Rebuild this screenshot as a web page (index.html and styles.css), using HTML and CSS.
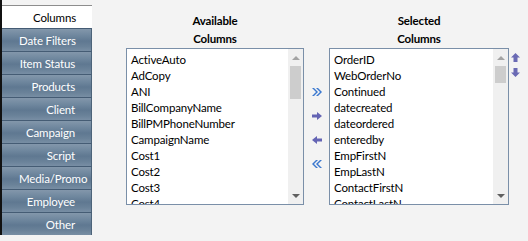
FILE: index.html
```html
<!DOCTYPE html>
<html>
<head>
<meta charset="utf-8">
<link rel="stylesheet" href="styles.css">
</head>
<body>
<div class="app">
  <div class="sidebar">
    <div class="tab active">Columns</div>
    <div class="tab">Date Filters</div>
    <div class="tab">Item Status</div>
    <div class="tab">Products</div>
    <div class="tab">Client</div>
    <div class="tab">Campaign</div>
    <div class="tab">Script</div>
    <div class="tab">Media/Promo</div>
    <div class="tab">Employee</div>
    <div class="tab">Other</div>
  </div>
  <div class="main">
    <div class="col col-avail">
      <div class="hdr">Available<br>Columns</div>
      <div class="listbox">
        <div class="items">
          <div class="item">ActiveAuto</div>
          <div class="item">AdCopy</div>
          <div class="item">ANI</div>
          <div class="item">BillCompanyName</div>
          <div class="item">BillPMPhoneNumber</div>
          <div class="item">CampaignName</div>
          <div class="item">Cost1</div>
          <div class="item">Cost2</div>
          <div class="item">Cost3</div>
          <div class="item">Cost4</div>
        </div>
        <div class="sbar">
          <div class="sb-up"><span class="tri-up light"></span></div>
          <div class="thumb thumb-long"></div>
          <div class="sb-fill"></div>
          <div class="sb-down"><span class="tri-down"></span></div>
        </div>
      </div>
    </div>
    <div class="movers">
      <svg class="mv" width="12" height="10" viewBox="0 0 12 10"><path d="M1 1 L5 5 L1 9 L3 9 L7 5 L3 1 Z M5 1 L9 5 L5 9 L7 9 L11 5 L7 1 Z" fill="#3b78cf"/></svg>
      <svg class="mv" width="12" height="10" viewBox="0 0 12 10"><path d="M1 3.5 H6 V1 L11 5 L6 9 V6.5 H1 Z" fill="#6464b4"/></svg>
      <svg class="mv" width="12" height="10" viewBox="0 0 12 10"><path d="M11 3.5 H6 V1 L1 5 L6 9 V6.5 H11 Z" fill="#6464b4"/></svg>
      <svg class="mv" width="12" height="10" viewBox="0 0 12 10"><path d="M11 1 L7 5 L11 9 L9 9 L5 5 L9 1 Z M7 1 L3 5 L7 9 L5 9 L1 5 L5 1 Z" fill="#3b78cf"/></svg>
    </div>
    <div class="col col-sel">
      <div class="hdr">Selected<br>Columns</div>
      <div class="listbox">
        <div class="items">
          <div class="item">OrderID</div>
          <div class="item">WebOrderNo</div>
          <div class="item">Continued</div>
          <div class="item">datecreated</div>
          <div class="item">dateordered</div>
          <div class="item">enteredby</div>
          <div class="item">EmpFirstN</div>
          <div class="item">EmpLastN</div>
          <div class="item">ContactFirstN</div>
          <div class="item">ContactLastN</div>
        </div>
        <div class="sbar">
          <div class="sb-up"><span class="tri-up light"></span></div>
          <div class="thumb thumb-short"></div>
          <div class="sb-fill"></div>
          <div class="sb-down"><span class="tri-down"></span></div>
        </div>
      </div>
    </div>
    <div class="order">
      <svg width="9" height="9" viewBox="0 0 9 9"><path d="M4.5 0 L9 4.5 H6.5 V9 H2.5 V4.5 H0 Z" fill="#6a6ab4"/></svg>
      <svg width="9" height="9" viewBox="0 0 9 9"><path d="M4.5 9 L9 4.5 H6.5 V0 H2.5 V4.5 H0 Z" fill="#6a6ab4"/></svg>
    </div>
  </div>
</div>
</body>
</html>
```
FILE: styles.css
```css
html, body {
  margin: 0;
  padding: 0;
}
body {
  width: 528px;
  height: 241px;
  background: #f3f3f3;
  font-family: Lato, "Noto Sans", sans-serif;
  font-size: 11.5px;
  letter-spacing: -0.15px;
  color: #000;
  overflow: hidden;
}
.app {
  display: flex;
  align-items: flex-start;
}
.sidebar {
  width: 90px;
  height: 230px;
  padding-top: 5px;
  border-left: 2px solid #111;
  display: flex;
  flex-direction: column;
  flex-shrink: 0;
}
.tab {
  height: 22px;
  line-height: 23px;
  border-top: 1px solid #455c74;
  color: #fff;
  text-align: right;
  white-space: nowrap;
  padding-left: 17px;
  padding-right: 16px;
  width: 56px;
  background: linear-gradient(#8397ab 0%, #6f879e 30%, #5f7891 55%, #6a8299 80%, #788ea4 100%);
  border-right: 1px solid #4c6379;
}
.tab.active {
  background: #fff;
  color: #000;
  border-top: 1px solid #8d8d8d;
  border-right: none;
  width: 57px;
}
.main {
  display: flex;
  align-items: flex-start;
  padding-top: 12px;
  padding-left: 34px;
}
.col {
  display: flex;
  flex-direction: column;
  flex-shrink: 0;
}
.col-avail { width: 178px; }
.col-sel { width: 180px; }
.hdr {
  font-weight: bold;
  text-align: center;
  line-height: 18px;
  height: 36px;
}
.listbox {
  height: 155px;
  border: 1px solid #7a8fa8;
  background: #fff;
  display: flex;
  overflow: hidden;
}
.items {
  flex: 1;
  padding: 3px 0 0 4px;
  overflow: hidden;
}
.item {
  height: 16px;
  line-height: 16px;
  white-space: nowrap;
}
.sbar {
  width: 15px;
  background: #f0f0f0;
  display: flex;
  flex-direction: column;
  align-items: center;
}
.sb-up, .sb-down {
  height: 17px;
  display: flex;
  align-items: center;
  justify-content: center;
}
.sb-fill { flex: 1; }
.tri-up {
  width: 0; height: 0;
  border-left: 4px solid transparent;
  border-right: 4px solid transparent;
  border-bottom: 4px solid #a3a3a3;
}
.tri-down {
  width: 0; height: 0;
  border-left: 4px solid transparent;
  border-right: 4px solid transparent;
  border-top: 4px solid #606060;
}
.thumb {
  width: 11px;
  background: #cdcdcd;
}
.thumb-long { height: 33px; }
.thumb-short { height: 17px; }
.movers {
  width: 25px;
  padding-top: 75px;
  display: flex;
  flex-direction: column;
  align-items: center;
  gap: 14px;
  flex-shrink: 0;
}
.order {
  padding-top: 41px;
  padding-left: 2px;
  display: flex;
  flex-direction: column;
  gap: 6px;
}
```
